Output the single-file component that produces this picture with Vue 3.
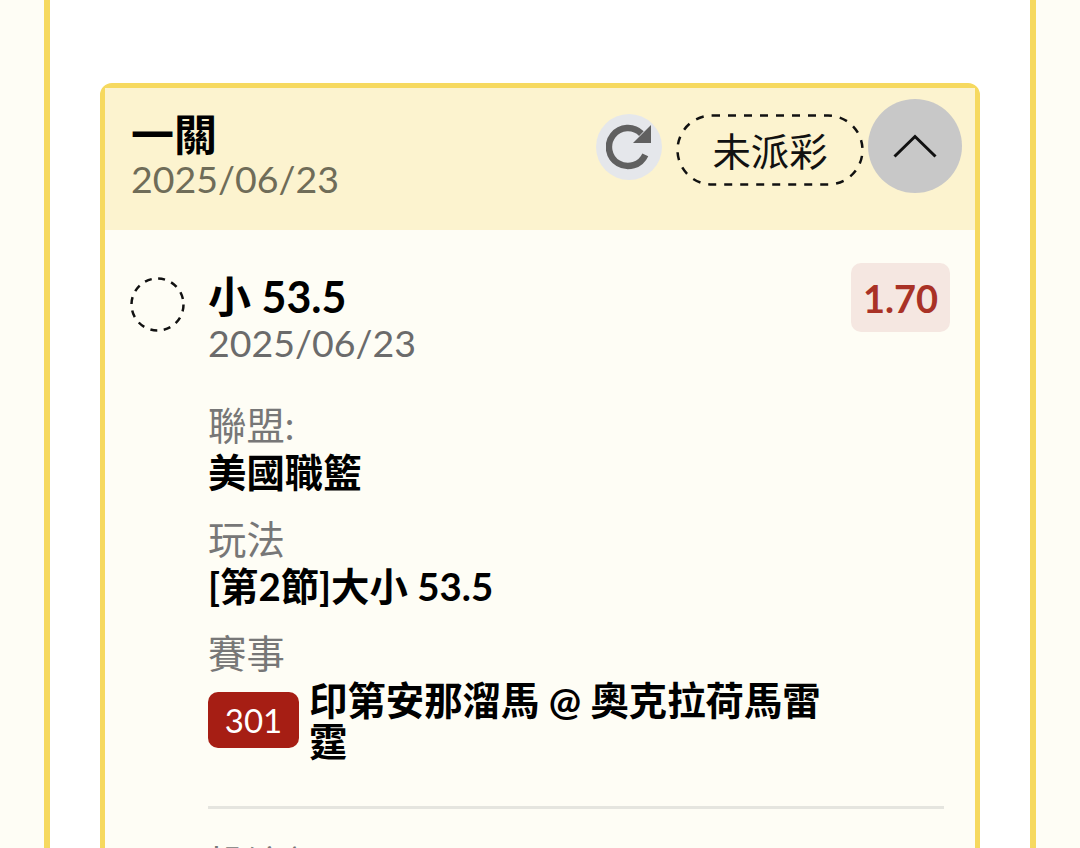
<script setup>
const sections = [
  { label: '聯盟:', value: '美國職籃' },
  { label: '玩法', value: '[第2節]大小 53.5' },
]
</script>

<template>
  <div class="page">
    <div class="outer">
      <div class="card">
        <header class="head">
          <div class="head-text">
            <div class="title">一關</div>
            <div class="date">2025/06/23</div>
          </div>
          <div class="head-actions">
            <span class="refresh">
              <svg width="46" height="46" viewBox="0 0 46 46">
                <path d="M39.3 30.8A19 19 0 1 1 35.4 9.6" fill="none" stroke="#606060" stroke-width="6.5"/>
                <path d="M45 1V19H27Z" fill="#606060"/>
              </svg>
            </span>
            <span class="status">
              <svg class="dash" width="188" height="72" viewBox="0 0 188 72">
                <rect x="1.5" y="1.5" width="185" height="69" rx="34.5" fill="none" stroke="#111" stroke-width="2.5" stroke-dasharray="8 8"/>
              </svg>
              未派彩
            </span>
            <span class="toggle">
              <svg width="46" height="26" viewBox="0 0 46 26">
                <path d="M2.5 23.5 23 3.5l20.5 20" fill="none" stroke="#111" stroke-width="3"/>
              </svg>
            </span>
          </div>
        </header>
        <div class="body">
          <div class="row">
            <svg class="ring" width="55" height="55" viewBox="0 0 55 55">
              <circle cx="27.5" cy="27.5" r="26" fill="none" stroke="#111" stroke-width="2.5" stroke-dasharray="7 6.6"/>
            </svg>
            <div class="main">
              <div class="row-top">
                <div>
                  <div class="pick">小 53.5</div>
                  <div class="pick-date">2025/06/23</div>
                </div>
                <span class="odds">1.70</span>
              </div>
              <div v-for="s in sections" :key="s.label" class="section">
                <div class="label">{{ s.label }}</div>
                <div class="value">{{ s.value }}</div>
              </div>
              <div class="section">
                <div class="label">賽事</div>
                <div class="match">
                  <span class="badge">301</span>
                  <span class="value match-name">印第安那溜馬 @ 奧克拉荷馬雷霆</span>
                </div>
              </div>
              <div class="divider"></div>
              <div class="label next">投注額</div>
              <div class="value">100.00</div>
            </div>
          </div>
        </div>
      </div>
    </div>
  </div>
</template>

<style>
html, body { margin: 0; background: #fefdf5; overflow: hidden; }
</style>

<style scoped>
.page {
  height: 848px;
  overflow: hidden;
  padding: 0 44px;
  box-sizing: border-box;
  background: #fefdf5;
  font-family: "Lato", "Noto Sans CJK TC", sans-serif;
}
.outer {
  min-height: 100%;
  box-sizing: border-box;
  background: #fff;
  border: solid #f6d95f;
  border-width: 0 6px;
  padding: 83px 50px 0;
}
.card {
  border: 5px solid #f6d95f;
  border-radius: 12px;
  background: #fefdf5;
}
.head {
  height: 142px;
  box-sizing: border-box;
  background: #fcf3cf;
  padding: 0 13px 0 26px;
  display: flex;
  justify-content: space-between;
  align-items: flex-start;
}
.head-text { padding-top: 23px; }
.title {
  font-size: 43px;
  line-height: 47px;
  font-weight: 700;
  color: #000;
}
.date {
  font-size: 37.5px;
  line-height: 42px;
  color: #6f6c58;
}
.head-actions {
  display: flex;
  align-items: flex-start;
  padding-top: 11px;
}
.refresh {
  width: 66px;
  height: 66px;
  margin-top: 14.5px;
  border-radius: 50%;
  background: #e5e7eb;
  display: flex;
  align-items: center;
  justify-content: center;
}
.status {
  position: relative;
  width: 188px;
  height: 72px;
  box-sizing: border-box;
  margin: 15px 0 0 14px;
  padding-bottom: 2px;
  display: flex;
  align-items: center;
  justify-content: center;
  font-size: 38.4px;
  color: #111;
  font-family: "Noto Sans CJK TC", sans-serif;
}
.dash { position: absolute; left: 0; top: 0; }
.toggle {
  width: 94px;
  height: 94px;
  margin-left: 4px;
  border-radius: 50%;
  background: #c8c8c8;
  display: flex;
  align-items: center;
  justify-content: center;
}
.body { padding: 33px 25px 0; }
.row { display: flex; gap: 23px; }
.ring {
  flex: none;
  margin-top: 14px;
}
.main { flex: 1; min-width: 0; }
.row-top {
  display: flex;
  justify-content: space-between;
  align-items: flex-start;
  margin-bottom: 34px;
}
.pick {
  font-size: 43px;
  line-height: 46px;
  font-weight: 700;
  color: #000;
  margin-top: 11px;
}
.pick-date {
  font-size: 37.5px;
  line-height: 46px;
  color: #6b6b6b;
}
.odds {
  width: 99px;
  height: 69px;
  border-radius: 10px;
  background: #f5e7e1;
  color: #a93226;
  font-size: 38px;
  font-weight: 700;
  display: flex;
  align-items: center;
  justify-content: center;
}
.section { margin-top: 20px; }
.row-top + .section { margin-top: 0; }
.label {
  font-size: 38.4px;
  line-height: 50px;
  color: #777;
}
.value {
  font-size: 38.4px;
  line-height: 44px;
  font-weight: 700;
  color: #000;
}
.match { display: flex; align-items: flex-start; gap: 10px; margin-top: 4px; }
.badge {
  flex: none;
  width: 91px;
  height: 56px;
  margin-top: 10px;
  border-radius: 10px;
  background: #a61e14;
  color: #fff;
  font-size: 33px;
  display: flex;
  align-items: center;
  justify-content: center;
}
.match-name { width: 520px; line-height: 41px; margin-top: -2px; }
.divider {
  height: 3px;
  background: #e5e5df;
  margin-top: 44px;
  margin-right: 6px;
}
.next { margin-top: 30px; }
</style>
